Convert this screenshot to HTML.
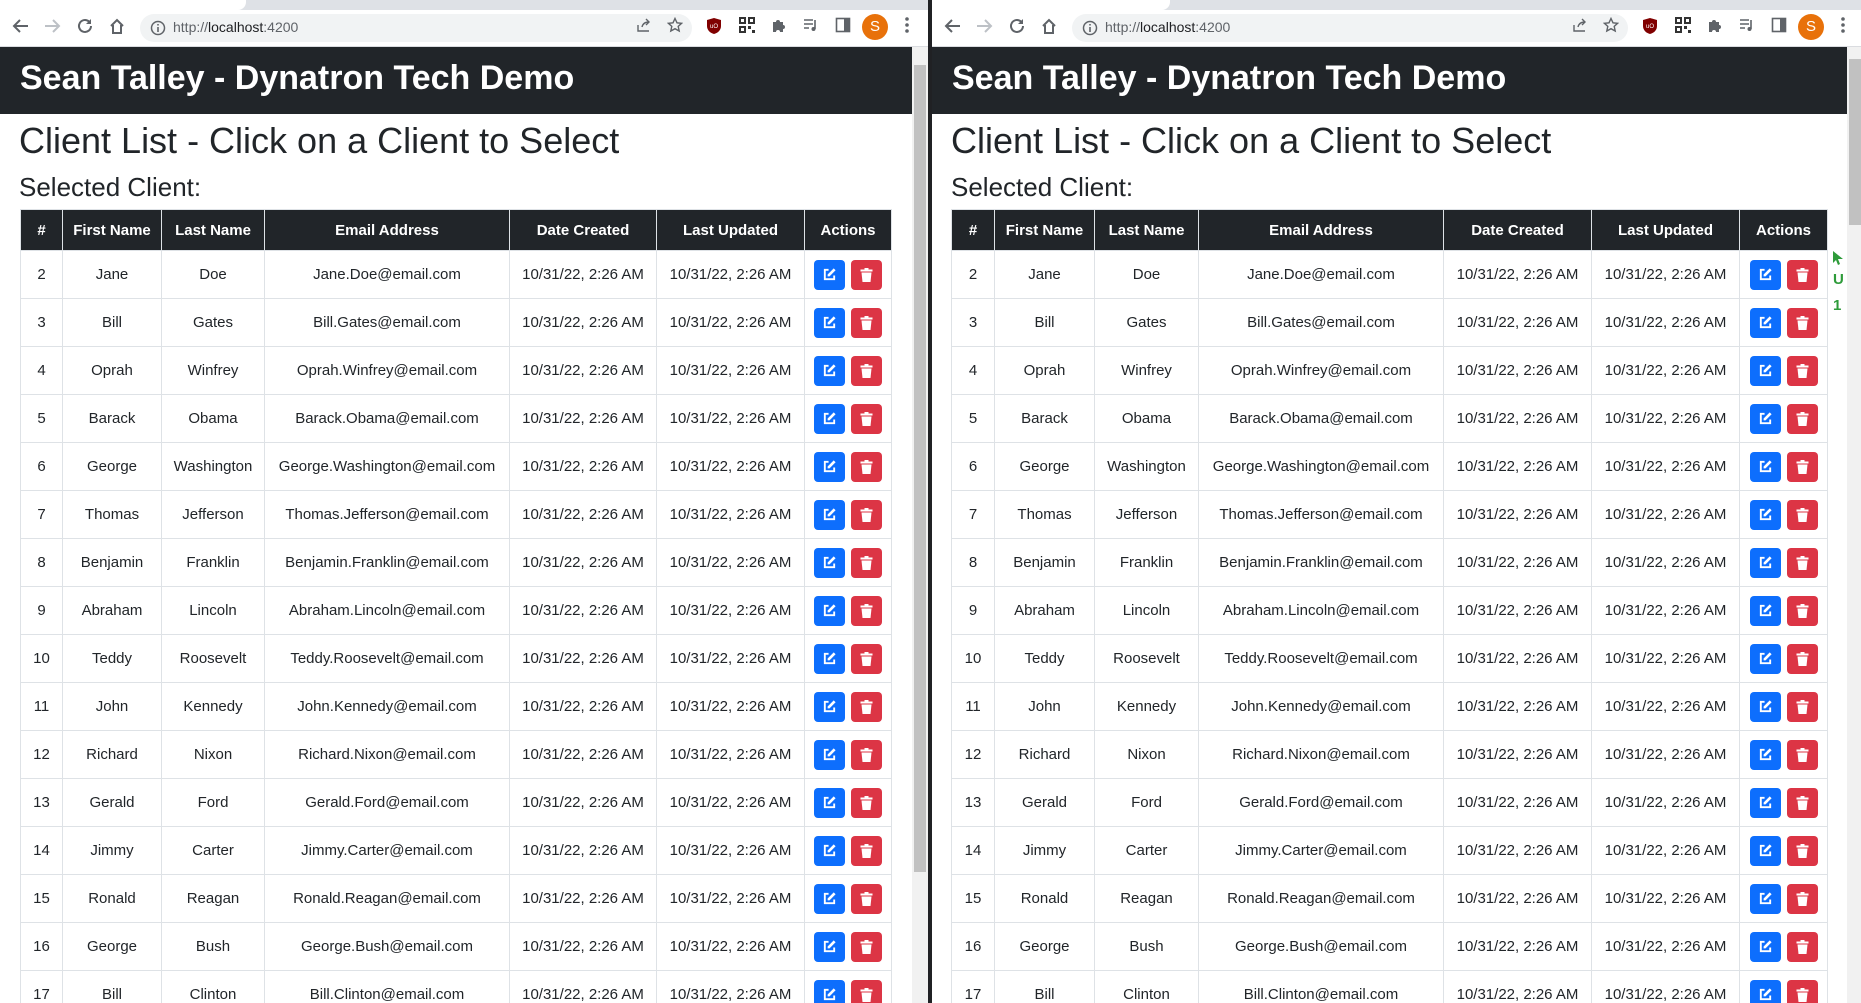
<!DOCTYPE html>
<html><head><meta charset="utf-8">
<style>
*{box-sizing:border-box;margin:0;padding:0}
html,body{width:1861px;height:1003px;overflow:hidden;background:#fff;font-family:"Liberation Sans",sans-serif;color:#212529}
.chrome{position:absolute;top:0;height:47px;background:#fff;border-bottom:1px solid #dadce0}
.tabs{position:absolute;left:0;right:0;top:0;height:10px;background:#dee1e6}
.tab{position:absolute;left:0;top:0;width:246px;height:10px;background:#fff;border-radius:0 0 8px 0}
.pill{position:absolute;left:140px;top:14px;width:552px;height:28px;border-radius:14px;background:#f1f3f4}
.url{position:absolute;left:173px;top:19px;font-size:14px;color:#5f6368}
.url b{font-weight:normal;color:#202124}
.ic{position:absolute;top:17px}
.win{position:absolute;top:47px;height:956px;overflow:hidden;background:#fff}
.hdr{position:absolute;left:0;top:0;right:0;height:67px;background:#212529;color:#fff;font-weight:bold;font-size:34px;padding-left:20px;line-height:63px}
h1{position:absolute;left:19px;top:73px;font-size:36px;font-weight:normal;line-height:42px;white-space:nowrap}
h2{position:absolute;left:19px;top:124px;font-size:26px;font-weight:normal;line-height:32px}
table{position:absolute;left:20px;top:162px;border-collapse:collapse;font-size:15px;table-layout:fixed}
th{background:#212529;color:#fff;font-weight:bold;height:41px;border:1px solid #dee2e6;text-align:center}
td{height:48px;border:1px solid #dee2e6;text-align:center;white-space:nowrap}
.b{display:inline-block;width:31px;height:30px;border-radius:4px;vertical-align:middle;position:relative}
.e{background:#0d6efd;margin-right:6px}
.d{background:#dc3545}
.b svg{position:absolute;left:8px;top:7px}
.sb{position:absolute;top:47px;height:956px;background:#f1f1f1}
.th{position:absolute;background:#c1c1c1}
</style></head><body>

<div class="chrome" style="left:0;width:928px">
<div class="tabs"><div class="tab"></div></div>
<svg class="ic" style="left:12px" width="18" height="18" viewBox="0 0 18 18"><path d="M16 9H3M8 3L2 9l6 6" stroke="#5f6368" stroke-width="2" fill="none"/></svg>
<svg class="ic" style="left:43px" width="18" height="18" viewBox="0 0 18 18"><path d="M2 9h13M10 3l6 6-6 6" stroke="#bdc1c6" stroke-width="2" fill="none"/></svg>
<svg class="ic" style="left:76px" width="18" height="18" viewBox="0 0 18 18"><path d="M15 9a6 6 0 1 1-2-4.5" stroke="#5f6368" stroke-width="2" fill="none"/><path d="M15 2v5h-5z" fill="#5f6368"/></svg>
<svg class="ic" style="left:108px" width="18" height="18" viewBox="0 0 18 18"><path d="M3 9L9 3l6 6M5 8v8h8V8" stroke="#5f6368" stroke-width="2" fill="none"/></svg>
<div class="pill"></div>
<svg class="ic" style="left:150px;top:20px" width="16" height="16" viewBox="0 0 16 16"><circle cx="8" cy="8" r="6.5" stroke="#5f6368" stroke-width="1.5" fill="none"/><path d="M8 7v5M8 4v1.5" stroke="#5f6368" stroke-width="1.6"/></svg>
<div class="url">http://<b>localhost</b>:4200</div>
<svg class="ic" style="left:636px" width="16" height="16" viewBox="0 0 16 16"><path d="M2 8v6h11M6 10c1-4 4-5 7-5M10 2l3 3-3 3" stroke="#5f6368" stroke-width="1.4" fill="none"/></svg>
<svg class="ic" style="left:667px" width="16" height="16" viewBox="0 0 16 16"><path d="M8 1.5l2 4.3 4.6.5-3.4 3.1 1 4.6L8 11.7 3.8 14l1-4.6L1.4 6.3 6 5.8z" stroke="#5f6368" stroke-width="1.4" fill="none"/></svg>
<svg class="ic" style="left:706px" width="16" height="18" viewBox="0 0 16 18"><path d="M8 1l7 2v6c0 4-3 7-7 8-4-1-7-4-7-8V3z" fill="#800000"/><text x="4" y="11" font-size="6" fill="#fff" font-family="Liberation Sans">uO</text></svg>
<svg class="ic" style="left:739px" width="16" height="16" viewBox="0 0 16 16"><path d="M0 0h7v7H0zM9 0h7v7H9zM0 9h7v7H0zM9 9h3v3H9zM13 13h3v3h-3z" fill="#333"/><path d="M2 2h3v3H2zM11 2h3v3h-3zM2 11h3v3H2z" fill="#fff"/></svg>
<svg class="ic" style="left:771px" width="16" height="16" viewBox="0 0 16 16"><path d="M2 5h3a2 2 0 1 1 4 0h3v3a2 2 0 1 1 0 4v3H9a2 2 0 1 0-4 0H2z" fill="#5f6368"/></svg>
<svg class="ic" style="left:803px" width="16" height="16" viewBox="0 0 16 16"><path d="M1 3h9M1 7h9M1 11h5M12 3v9" stroke="#5f6368" stroke-width="1.6"/><circle cx="10.5" cy="12" r="2" fill="#5f6368"/></svg>
<svg class="ic" style="left:835px" width="16" height="16" viewBox="0 0 16 16"><rect x="1.5" y="1.5" width="13" height="13" stroke="#5f6368" stroke-width="1.6" fill="none"/><rect x="9" y="1.5" width="5.5" height="13" fill="#5f6368"/></svg>
<div style="position:absolute;left:862px;top:14px;width:26px;height:26px;border-radius:13px;background:#e8710a;color:#fff;font-size:15px;text-align:center;line-height:26px">S</div>
<svg class="ic" style="left:905px" width="4" height="16" viewBox="0 0 4 16"><circle cx="2" cy="2" r="1.8" fill="#5f6368"/><circle cx="2" cy="8" r="1.8" fill="#5f6368"/><circle cx="2" cy="14" r="1.8" fill="#5f6368"/></svg>
</div>

<div style="position:absolute;left:928px;top:0;width:4px;height:1003px;background:#202124"></div>

<div class="chrome" style="left:932px;width:929px">
<div class="tabs"><div class="tab" style="width:238px"></div></div>
<svg class="ic" style="left:12px" width="18" height="18" viewBox="0 0 18 18"><path d="M16 9H3M8 3L2 9l6 6" stroke="#5f6368" stroke-width="2" fill="none"/></svg>
<svg class="ic" style="left:43px" width="18" height="18" viewBox="0 0 18 18"><path d="M2 9h13M10 3l6 6-6 6" stroke="#bdc1c6" stroke-width="2" fill="none"/></svg>
<svg class="ic" style="left:76px" width="18" height="18" viewBox="0 0 18 18"><path d="M15 9a6 6 0 1 1-2-4.5" stroke="#5f6368" stroke-width="2" fill="none"/><path d="M15 2v5h-5z" fill="#5f6368"/></svg>
<svg class="ic" style="left:108px" width="18" height="18" viewBox="0 0 18 18"><path d="M3 9L9 3l6 6M5 8v8h8V8" stroke="#5f6368" stroke-width="2" fill="none"/></svg>
<div class="pill" style="left:140px;width:556px"></div>
<svg class="ic" style="left:150px;top:20px" width="16" height="16" viewBox="0 0 16 16"><circle cx="8" cy="8" r="6.5" stroke="#5f6368" stroke-width="1.5" fill="none"/><path d="M8 7v5M8 4v1.5" stroke="#5f6368" stroke-width="1.6"/></svg>
<div class="url">http://<b>localhost</b>:4200</div>
<svg class="ic" style="left:640px" width="16" height="16" viewBox="0 0 16 16"><path d="M2 8v6h11M6 10c1-4 4-5 7-5M10 2l3 3-3 3" stroke="#5f6368" stroke-width="1.4" fill="none"/></svg>
<svg class="ic" style="left:671px" width="16" height="16" viewBox="0 0 16 16"><path d="M8 1.5l2 4.3 4.6.5-3.4 3.1 1 4.6L8 11.7 3.8 14l1-4.6L1.4 6.3 6 5.8z" stroke="#5f6368" stroke-width="1.4" fill="none"/></svg>
<svg class="ic" style="left:710px" width="16" height="18" viewBox="0 0 16 18"><path d="M8 1l7 2v6c0 4-3 7-7 8-4-1-7-4-7-8V3z" fill="#800000"/><text x="4" y="11" font-size="6" fill="#fff" font-family="Liberation Sans">uO</text></svg>
<svg class="ic" style="left:743px" width="16" height="16" viewBox="0 0 16 16"><path d="M0 0h7v7H0zM9 0h7v7H9zM0 9h7v7H0zM9 9h3v3H9zM13 13h3v3h-3z" fill="#333"/><path d="M2 2h3v3H2zM11 2h3v3h-3zM2 11h3v3H2z" fill="#fff"/></svg>
<svg class="ic" style="left:775px" width="16" height="16" viewBox="0 0 16 16"><path d="M2 5h3a2 2 0 1 1 4 0h3v3a2 2 0 1 1 0 4v3H9a2 2 0 1 0-4 0H2z" fill="#5f6368"/></svg>
<svg class="ic" style="left:807px" width="16" height="16" viewBox="0 0 16 16"><path d="M1 3h9M1 7h9M1 11h5M12 3v9" stroke="#5f6368" stroke-width="1.6"/><circle cx="10.5" cy="12" r="2" fill="#5f6368"/></svg>
<svg class="ic" style="left:839px" width="16" height="16" viewBox="0 0 16 16"><rect x="1.5" y="1.5" width="13" height="13" stroke="#5f6368" stroke-width="1.6" fill="none"/><rect x="9" y="1.5" width="5.5" height="13" fill="#5f6368"/></svg>
<div style="position:absolute;left:866px;top:14px;width:26px;height:26px;border-radius:13px;background:#e8710a;color:#fff;font-size:15px;text-align:center;line-height:26px">S</div>
<svg class="ic" style="left:909px" width="4" height="16" viewBox="0 0 4 16"><circle cx="2" cy="2" r="1.8" fill="#5f6368"/><circle cx="2" cy="8" r="1.8" fill="#5f6368"/><circle cx="2" cy="14" r="1.8" fill="#5f6368"/></svg>
</div>

<div class="win" style="left:0;width:912px">
<div class="hdr">Sean Talley - Dynatron Tech Demo</div>
<h1>Client List - Click on a Client to Select</h1>
<h2>Selected Client:</h2>
<table style="width:871px">
<colgroup><col style="width:42px"><col style="width:99px"><col style="width:103px"><col style="width:245px"><col style="width:147px"><col style="width:148px"><col style="width:87px"></colgroup>
<tr><th>#</th><th>First Name</th><th>Last Name</th><th>Email Address</th><th>Date Created</th><th>Last Updated</th><th>Actions</th></tr>
<tbody id="L"></tbody>
</table>
</div>
<div class="sb" style="left:912px;width:16px"><div class="th" style="left:2px;width:12px;top:18px;height:807px"></div></div>

<div class="win" style="left:932px;width:915px">
<div class="hdr">Sean Talley - Dynatron Tech Demo</div>
<h1>Client List - Click on a Client to Select</h1>
<h2>Selected Client:</h2>
<table style="width:876px;top:162px;left:19px">
<colgroup><col style="width:43px"><col style="width:100px"><col style="width:104px"><col style="width:245px"><col style="width:148px"><col style="width:148px"><col style="width:88px"></colgroup>
<tr><th>#</th><th>First Name</th><th>Last Name</th><th>Email Address</th><th>Date Created</th><th>Last Updated</th><th>Actions</th></tr>
<tbody id="R"></tbody>
</table>
<svg style="position:absolute;left:900px;top:204px" width="12" height="14" viewBox="0 0 12 14"><path d="M1 0l10 8H6l2 5-2 1-2-5-3 3z" fill="#2e9b3a"/></svg>
<div style="position:absolute;left:901px;top:224px;color:#2e9b3a;font-weight:bold;font-size:15px">U</div>
<div style="position:absolute;left:901px;top:250px;color:#2e9b3a;font-weight:bold;font-size:15px">1</div>
</div>
<div class="sb" style="left:1847px;width:14px"><div class="th" style="left:2px;width:12px;top:12px;height:166px"></div></div>

<script>
var d=[[2,"Jane","Doe"],[3,"Bill","Gates"],[4,"Oprah","Winfrey"],[5,"Barack","Obama"],[6,"George","Washington"],[7,"Thomas","Jefferson"],[8,"Benjamin","Franklin"],[9,"Abraham","Lincoln"],[10,"Teddy","Roosevelt"],[11,"John","Kennedy"],[12,"Richard","Nixon"],[13,"Gerald","Ford"],[14,"Jimmy","Carter"],[15,"Ronald","Reagan"],[16,"George","Bush"],[17,"Bill","Clinton"]];
var ed='<svg width="15" height="15" viewBox="0 0 16 16"><path d="M7 3H3v10h10V9" stroke="#fff" stroke-width="2" fill="none"/><path d="M12.5 1.5l2 2L8 10H6V8z" fill="#fff"/></svg>';
var tr='<svg width="15" height="16" viewBox="0 0 14 16"><path d="M1 2.5h12v2H1zM5 1h4v1.5H5z" fill="#fff"/><path d="M2 5.5h10l-1 9.5H3z" fill="#fff"/></svg>';
var h='';
d.forEach(function(r){h+='<tr><td>'+r[0]+'</td><td>'+r[1]+'</td><td>'+r[2]+'</td><td>'+r[1]+'.'+r[2]+'@email.com</td><td>10/31/22, 2:26 AM</td><td>10/31/22, 2:26 AM</td><td><span class="b e">'+ed+'</span><span class="b d">'+tr+'</span></td></tr>';});
document.getElementById('L').innerHTML=h;document.getElementById('R').innerHTML=h;
</script>
</body></html>
